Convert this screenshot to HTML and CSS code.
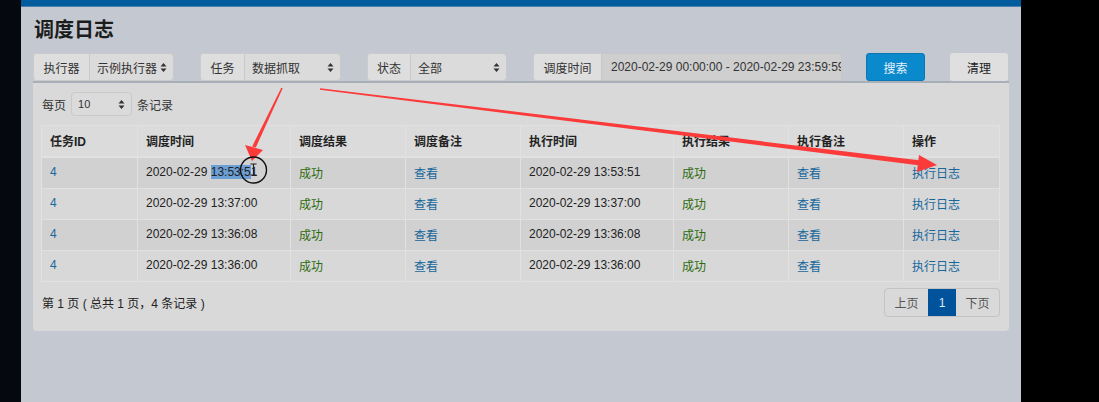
FILE: index.html
```html
<!DOCTYPE html>
<html>

<head>
  <meta charset="UTF-8">
  <title>调度日志</title>
  <link rel="stylesheet" href="styles.css">
</head>

<body>
  <div class="screen">
    <div class="side_left"></div>

    <div class="app">
      <div class="topbar"></div>

      <div class="content">
        <h1 class="title">调度日志</h1>

        <div class="filters">
          <div class="group g_exec">
            <span class="addon">执行器</span>
            <span class="select">示例执行器<svg class="caret" width="7" height="11" viewBox="0 0 7 11"><path d="M0.5 4.5 L3.5 1 L6.5 4.5 Z M0.5 6.5 L3.5 10 L6.5 6.5 Z" fill="#333"/></svg></span>
          </div>
          <div class="group g_job">
            <span class="addon">任务</span>
            <span class="select">数据抓取<svg class="caret" width="7" height="11" viewBox="0 0 7 11"><path d="M0.5 4.5 L3.5 1 L6.5 4.5 Z M0.5 6.5 L3.5 10 L6.5 6.5 Z" fill="#333"/></svg></span>
          </div>
          <div class="group g_status">
            <span class="addon">状态</span>
            <span class="select">全部<svg class="caret" width="7" height="11" viewBox="0 0 7 11"><path d="M0.5 4.5 L3.5 1 L6.5 4.5 Z M0.5 6.5 L3.5 10 L6.5 6.5 Z" fill="#333"/></svg></span>
          </div>
          <div class="group g_time">
            <span class="addon">调度时间</span>
            <span class="input">2020-02-29 00:00:00 - 2020-02-29 23:59:59</span>
          </div>
          <div class="btn btn_search">搜索</div>
          <div class="btn btn_clear">清理</div>
        </div>

        <div class="panel">
          <div class="length">
            每页
            <span class="select small">10<svg class="caret" width="7" height="11" viewBox="0 0 7 11"><path d="M0.5 4.5 L3.5 1 L6.5 4.5 Z M0.5 6.5 L3.5 10 L6.5 6.5 Z" fill="#333"/></svg></span>
            条记录
          </div>

          <table class="log_table">
            <colgroup>
              <col style="width:96px">
              <col style="width:153px">
              <col style="width:115px">
              <col style="width:115px">
              <col style="width:153px">
              <col style="width:115px">
              <col style="width:115px">
              <col style="width:96px">
            </colgroup>
            <thead>
              <tr>
                <th>任务ID</th>
                <th>调度时间</th>
                <th>调度结果</th>
                <th>调度备注</th>
                <th>执行时间</th>
                <th>执行结果</th>
                <th>执行备注</th>
                <th>操作</th>
              </tr>
            </thead>
            <tbody>
              <tr>
                <td><a>4</a></td>
                <td>2020-02-29 <span class="picked">13:53:5</span>1</td>
                <td class="ok">成功</td>
                <td><a>查看</a></td>
                <td>2020-02-29 13:53:51</td>
                <td class="ok">成功</td>
                <td><a>查看</a></td>
                <td><a>执行日志</a></td>
              </tr>
              <tr>
                <td><a>4</a></td>
                <td>2020-02-29 13:37:00</td>
                <td class="ok">成功</td>
                <td><a>查看</a></td>
                <td>2020-02-29 13:37:00</td>
                <td class="ok">成功</td>
                <td><a>查看</a></td>
                <td><a>执行日志</a></td>
              </tr>
              <tr>
                <td><a>4</a></td>
                <td>2020-02-29 13:36:08</td>
                <td class="ok">成功</td>
                <td><a>查看</a></td>
                <td>2020-02-29 13:36:08</td>
                <td class="ok">成功</td>
                <td><a>查看</a></td>
                <td><a>执行日志</a></td>
              </tr>
              <tr>
                <td><a>4</a></td>
                <td>2020-02-29 13:36:00</td>
                <td class="ok">成功</td>
                <td><a>查看</a></td>
                <td>2020-02-29 13:36:00</td>
                <td class="ok">成功</td>
                <td><a>查看</a></td>
                <td><a>执行日志</a></td>
              </tr>
            </tbody>
          </table>

          <div class="panel_foot">
            <div class="info">第 1 页 ( 总共 1 页，4 条记录 )</div>
            <div class="pager">
              <span class="page">上页</span>
              <span class="page active">1</span>
              <span class="page">下页</span>
            </div>
          </div>
        </div>
      </div>
    </div>

    <div class="side_right"></div>
  </div>

  <!-- annotations drawn over the screenshot -->
  <svg class="marks" width="1099" height="402" viewBox="0 0 1099 402">
    <polygon points="281.3,87.8 282.7,88.2 255.8,147.6 252.2,146.4" fill="#fb3a3a"/>
    <polygon points="245,145 263,150 252,161" fill="#fb3a3a"/>
    <polygon points="320.1,88.2 319.9,89.8 920.3,165.5 920.9,160.5" fill="#fb3a3a"/>
    <polygon points="919,155 917,172 937,165" fill="#fb3a3a"/>
    <circle cx="253.5" cy="170" r="13" fill="none" stroke="#111" stroke-width="1.4"/>
    <path d="M250.5 164 H256.5 M253.5 164 V175 M250.5 175 H256.5" stroke="#222" stroke-width="1.2" fill="none"/>
  </svg>
</body>

</html>
```

FILE: styles.css
```css
html,
body {
  width: 100%;
  height: 100%;
  margin: 0;
  padding: 0;
  overflow: hidden;
  background-color: #000;
  font-family: "Liberation Sans", "Noto Sans CJK SC", sans-serif;
  font-size: 12px;
  color: #222;
}

.screen {
  display: flex;
  width: 1099px;
  height: 402px;
}

.side_left {
  flex: 0 0 21px;
  background-color: #05080f;
}

.side_right {
  flex: 0 0 79px;
  background-color: #000;
}

.app {
  flex: 1;
  background-color: #c4c9d1;
}

.topbar {
  height: 6px;
  background-color: #005c9c;
  border-bottom: 1px solid #4a7fae;
}

.content {
  padding: 11px 12px 0 12px;
}

.title {
  margin: 0 0 11px 1px;
  font-size: 20px;
  line-height: 24px;
  font-weight: bold;
  color: #1c1c1c;
}

/* filter row */

.filters {
  display: flex;
  height: 28px;
}

.group {
  display: flex;
  height: 28px;
}

.g_job,
.g_status,
.g_time {
  margin-left: 26px;
}

.addon {
  display: flex;
  align-items: center;
  justify-content: center;
  box-sizing: border-box;
  height: 28px;
  background-color: #dedede;
  border: 1px solid #cbcbcb;
  border-right: none;
  border-radius: 3px 0 0 3px;
  color: #333;
}

.select {
  position: relative;
  display: flex;
  align-items: center;
  box-sizing: border-box;
  height: 28px;
  padding-left: 7px;
  background-color: #dbdbdb;
  border: 1px solid #c9c9c9;
  border-radius: 0 4px 4px 0;
  color: #333;
}

.caret {
  position: absolute;
  right: 6px;
  top: 50%;
  margin-top: -5px;
}

.g_exec .addon { width: 56px; }
.g_exec .select { width: 85px; }
.g_job .addon { width: 44px; }
.g_job .select { width: 97px; }
.g_status .addon { width: 43px; }
.g_status .select { width: 97px; }
.g_time .addon { width: 68px; }

.input {
  display: flex;
  align-items: center;
  box-sizing: border-box;
  width: 241px;
  height: 28px;
  padding-left: 9px;
  overflow: hidden;
  white-space: nowrap;
  background-color: #cfcfcf;
  border: 1px solid #c6c6c6;
  color: #333;
}

.btn {
  display: flex;
  align-items: center;
  justify-content: center;
  box-sizing: border-box;
  height: 28px;
  border-radius: 3px;
}

.btn_search {
  width: 59px;
  margin-left: 24px;
  background-color: #0a89cc;
  border: 1px solid #0877b4;
  color: #e8f2fa;
}

.btn_clear {
  width: 58px;
  margin-left: 25px;
  background-color: #dfdfdf;
  color: #222;
}

/* panel */

.panel {
  background-color: #d9d9d9;
  border-top: 2px solid #a9afb8;
  border-radius: 0 0 4px 4px;
  padding: 9px 9px 14px 8px;
}

.length {
  display: flex;
  align-items: center;
  height: 24px;
  padding-left: 1px;
  color: #333;
}

.select.small {
  width: 61px;
  height: 24px;
  margin: 0 5px 0 5px;
  padding-left: 6px;
  border-radius: 4px;
  font-size: 11px;
}

.log_table {
  width: 958px;
  margin-top: 9px;
  table-layout: fixed;
  border-collapse: collapse;
}

.log_table th,
.log_table td {
  height: 28px;
  padding: 0 8px 2px 8px;
  text-align: left;
  white-space: nowrap;
  border: 1px solid #e1e1e1;
}

.log_table th {
  background-color: #dbdbdb;
  font-weight: bold;
  color: #222;
  border-bottom: 2px solid #e1e1e1;
}

.log_table tbody tr:nth-child(odd) {
  background-color: #d1d1d1;
}

.log_table tbody tr:nth-child(even) {
  background-color: #d8d8d8;
}

.log_table a {
  color: #17679c;
}

.log_table .ok {
  color: #2d6b0f;
}

.picked {
  background-color: #6c9fd5;
}

.panel_foot {
  display: flex;
  justify-content: space-between;
  align-items: center;
  margin-top: 6px;
}

.info {
  padding-left: 1px;
  color: #222;
}

.pager {
  display: flex;
  height: 29px;
  border: 1px solid #c3c3c3;
  border-radius: 4px;
  overflow: hidden;
  box-sizing: border-box;
}

.page {
  display: flex;
  align-items: center;
  justify-content: center;
  width: 43px;
  color: #555;
}

.page.active {
  width: 28px;
  background-color: #00539b;
  color: #dfe9f3;
}

.marks {
  position: absolute;
  left: 0;
  top: 0;
  pointer-events: none;
}
```
